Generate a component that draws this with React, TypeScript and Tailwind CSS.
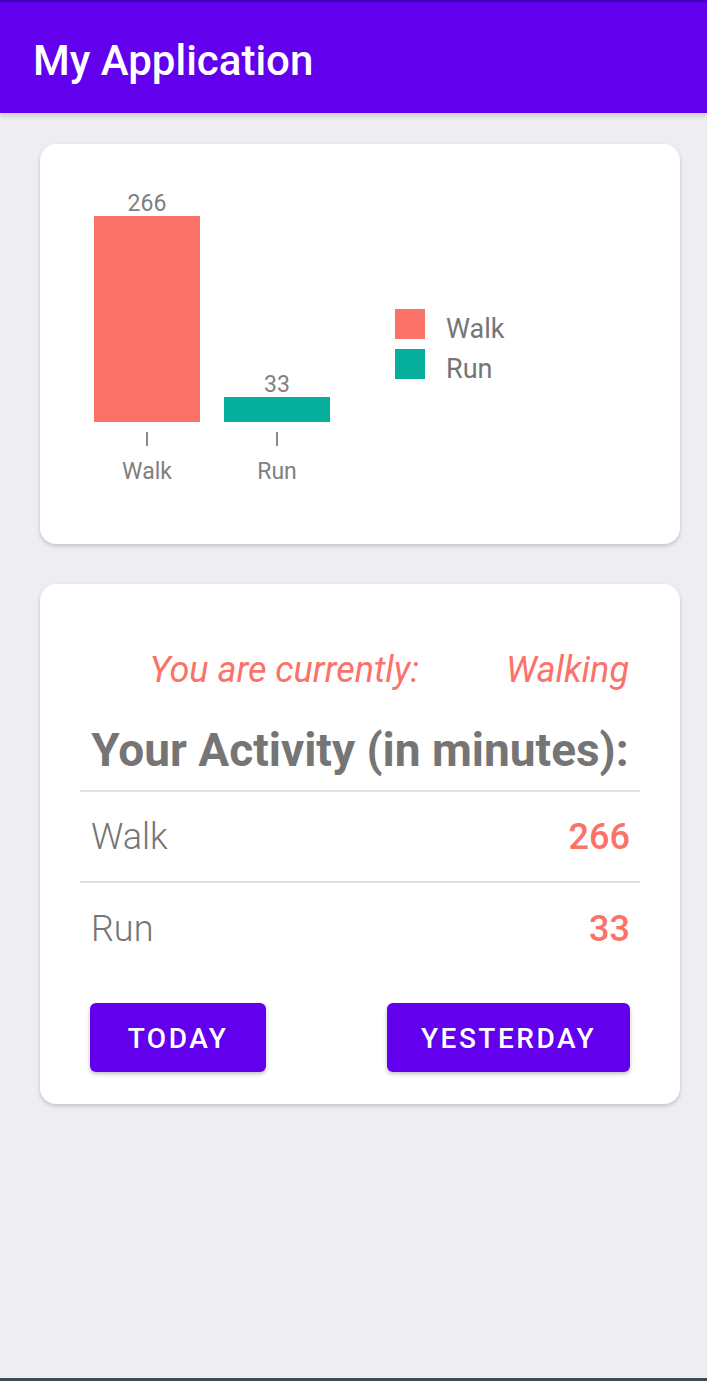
import React from 'react';

const bars = [
  { label: 'Walk', value: 266, height: 206, color: 'bg-[#fb7268]' },
  { label: 'Run', value: 33, height: 25, color: 'bg-[#06af9b]' },
];

function ChartCard() {
  return (
    <div className="ml-[40px] w-[640px] mt-[31px] h-[400px] bg-white rounded-[16px] shadow-[0_2px_4px_rgba(0,0,0,0.18)] flex">
      {/* bar chart */}
      <div className="ml-[54px] flex gap-[24px]">
        {bars.map((b) => (
          <div key={b.label} className="w-[106px] flex flex-col items-center">
            <div className="h-[278px] w-full flex flex-col justify-end items-center">
              <span className="text-[23px] leading-[24px] text-[#7f7f7f]">{b.value}</span>
              <div className={`w-full ${b.color}`} style={{ height: b.height }} />
            </div>
            <div className="w-[2px] h-[14px] bg-[#8a8a8a] mt-[10px]" />
            <span className="text-[23px] leading-[24px] text-[#7f7f7f] mt-[14px]">{b.label}</span>
          </div>
        ))}
      </div>

      {/* legend */}
      <div className="ml-[65px] mt-[165px] flex flex-col gap-[10px]">
        <div className="flex items-start gap-[21px]">
          <div className="w-[30px] h-[30px] bg-[#fb7268]" />
          <span className="h-[30px] text-[27px] leading-[40px] text-[#757575]">Walk</span>
        </div>
        <div className="flex items-start gap-[21px]">
          <div className="w-[30px] h-[30px] bg-[#06af9b]" />
          <span className="h-[30px] text-[27px] leading-[40px] text-[#757575]">Run</span>
        </div>
      </div>
    </div>
  );
}

function ActivityCard() {
  return (
    <div className="ml-[40px] w-[640px] mt-[40px] bg-white rounded-[16px] shadow-[0_2px_4px_rgba(0,0,0,0.18)] px-[40px] pt-[62px] pb-[32px]">
      <div className="flex justify-end gap-[87px] pr-[11px] h-[48px] items-center text-[36px] italic text-[#fb7268]">
        <span>You are currently:</span>
        <span>Walking</span>
      </div>

      <div className="mt-[28px] h-[56px] flex items-center justify-center text-[46px] font-bold text-[#757575]">
        Your Activity (in minutes):
      </div>

      <div className="mt-[12px] h-[2px] bg-[#e0e0e0]" />
      <div className="h-[89px] flex items-center justify-between pl-[11px] pr-[10px]">
        <span className="text-[36px] font-light text-[#757575]">Walk</span>
        <span className="text-[36px] font-medium text-[#fb7268]">266</span>
      </div>
      <div className="h-[2px] bg-[#e0e0e0]" />
      <div className="h-[91px] flex items-center justify-between pl-[11px] pr-[10px]">
        <span className="text-[36px] font-light text-[#757575]">Run</span>
        <span className="text-[36px] font-medium text-[#fb7268]">33</span>
      </div>

      <div className="mt-[29px] flex justify-between px-[10px]">
        <button className="w-[176px] h-[69px] pt-[3px] rounded-[6px] bg-[#6200ee] text-white text-[28px] font-medium tracking-[0.09em] shadow-[0_2px_4px_rgba(0,0,0,0.25)]">
          TODAY
        </button>
        <button className="w-[243px] h-[69px] pt-[3px] rounded-[6px] bg-[#6200ee] text-white text-[28px] font-medium tracking-[0.09em] shadow-[0_2px_4px_rgba(0,0,0,0.25)]">
          YESTERDAY
        </button>
      </div>
    </div>
  );
}

export default function App() {
  return (
    <div className="min-h-[1381px] flex flex-col bg-[#eeedf2] font-['Roboto',sans-serif]">
      <div className="h-[2px] bg-[#3a00b8]" />
      <div className="h-[111px] bg-[#6200ee] flex items-center pl-[33px] pt-[6px] shadow-[0_3px_5px_rgba(0,0,0,0.15)] relative z-10">
        <h1 className="text-[42px] font-medium text-white">My Application</h1>
      </div>

      <ChartCard />
      <ActivityCard />

      <div className="mt-auto h-[3px] bg-[#3e4a4f]" />
    </div>
  );
}
